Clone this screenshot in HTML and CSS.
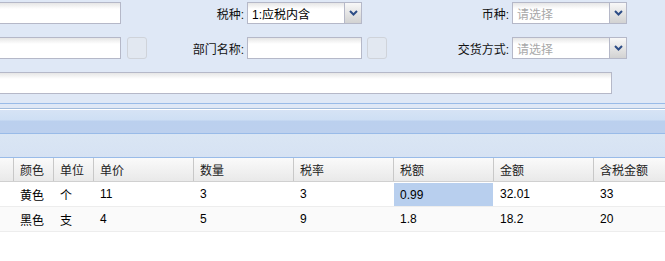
FILE: index.html
```html
<!DOCTYPE html>
<html lang="zh">
  <head>
    <meta charset="UTF-8" />
    <title>订单明细</title>
    <link rel="stylesheet" href="styles.css">
  </head>
  <body>
    <div class="form-panel">
      <div class="form-grid">
        <div class="field text c-first"></div>
        <div class="label c-lab1">税种:</div>
        <div class="field combo c-f1">
          <span class="combo-value">1:应税内含</span>
          <span class="trigger"><svg width="9" height="6" viewBox="0 0 9 6"><polyline points="1,1 4.5,4.5 8,1" fill="none" stroke="#2d4d86" stroke-width="2"/></svg></span>
        </div>
        <div class="label c-lab2">币种:</div>
        <div class="field combo c-f2">
          <span class="combo-value empty">请选择</span>
          <span class="trigger"><svg width="9" height="6" viewBox="0 0 9 6"><polyline points="1,1 4.5,4.5 8,1" fill="none" stroke="#2d4d86" stroke-width="2"/></svg></span>
        </div>

        <div class="field text c-first"></div>
        <div class="btn c-btn1"></div>
        <div class="label c-lab1">部门名称:</div>
        <div class="field text c-f1"></div>
        <div class="btn c-btn2"></div>
        <div class="label c-lab2">交货方式:</div>
        <div class="field combo c-f2">
          <span class="combo-value empty">请选择</span>
          <span class="trigger"><svg width="9" height="6" viewBox="0 0 9 6"><polyline points="1,1 4.5,4.5 8,1" fill="none" stroke="#2d4d86" stroke-width="2"/></svg></span>
        </div>

        <div class="field text c-wide"></div>
      </div>
    </div>

    <div class="gap-strip"></div>
    <div class="panel-header"></div>
    <div class="toolbar"></div>

    <div class="grid">
      <div class="grid-row head">
        <div class="cell"></div>
        <div class="cell">颜色</div>
        <div class="cell">单位</div>
        <div class="cell">单价</div>
        <div class="cell">数量</div>
        <div class="cell">税率</div>
        <div class="cell">税额</div>
        <div class="cell">金额</div>
        <div class="cell">含税金额</div>
      </div>
      <div class="grid-row">
        <div class="cell"></div>
        <div class="cell">黄色</div>
        <div class="cell">个</div>
        <div class="cell">11</div>
        <div class="cell">3</div>
        <div class="cell">3</div>
        <div class="cell selected">0.99</div>
        <div class="cell">32.01</div>
        <div class="cell">33</div>
      </div>
      <div class="grid-row alt">
        <div class="cell"></div>
        <div class="cell">黑色</div>
        <div class="cell">支</div>
        <div class="cell">4</div>
        <div class="cell">5</div>
        <div class="cell">9</div>
        <div class="cell">1.8</div>
        <div class="cell">18.2</div>
        <div class="cell">20</div>
      </div>
    </div>
  </body>
</html>
```

FILE: styles.css
```css
body {
  margin: 0;
  width: 665px;
  height: 261px;
  overflow: hidden;
  background: #fff;
  font-family: "Liberation Sans", "Noto Sans CJK SC", sans-serif;
  font-size: 12px;
  color: #000;
}
.form-panel {
  background: #dfe8f6;
  height: 103px;
  border-bottom: 1px solid #99bbe8;
  overflow: hidden;
}
.form-grid {
  display: grid;
  grid-template-columns: 131px 6px 20px 100px 115px 5px 20px 125px 115px;
  grid-auto-rows: 22px;
  row-gap: 13px;
  margin-left: -10px;
  padding-top: 2px;
}
.c-first { grid-column: 1; }
.c-btn1 { grid-column: 3; }
.c-lab1 { grid-column: 4; }
.c-f1 { grid-column: 5; }
.c-btn2 { grid-column: 7; }
.c-lab2 { grid-column: 8; }
.c-f2 { grid-column: 9; }
.c-wide {
  grid-column: 1 / 10;
  width: 622px;
}
.label {
  display: flex;
  align-items: center;
  justify-content: flex-end;
  padding-right: 3px;
  color: #111;
}
.field {
  box-sizing: border-box;
  border: 1px solid #b5b8c8;
  background: linear-gradient(#e6e6e6, #ffffff 6px);
}
.combo {
  display: flex;
  align-items: center;
}
.combo-value {
  flex: 1;
  padding-left: 4px;
  color: #000;
}
.combo-value.empty {
  color: #a8a8a8;
}
.trigger {
  width: 17px;
  align-self: stretch;
  box-sizing: border-box;
  border-left: 1px solid #b5b8c8;
  background: linear-gradient(#f8f8f8, #d2d2d2);
  display: flex;
  align-items: center;
  justify-content: center;
}
.btn {
  box-sizing: border-box;
  border: 1px solid #cfd3da;
  border-radius: 3px;
  background: #e2e8f1;
}
.gap-strip {
  height: 4px;
  background: #dfe8f6;
}
.panel-header {
  height: 24px;
  border-top: 1px solid #a3bcdc;
  border-bottom: 1px solid #99bbe8;
  background: linear-gradient(#ffffff 0, #ffffff 1px, #d6e3f5 1px, #cedff4 11px, #bbd0ee 12px, #bcd0ee);
}
.toolbar {
  height: 23px;
  border-bottom: 1px solid #99bbe8;
  background: linear-gradient(#dae6f4, #d6e2f3);
}
.grid {
  margin-left: -8px;
}
.grid-row {
  display: grid;
  grid-template-columns: 22px 40px 40px 100px 100px 100px 100px 100px 100px;
  height: 25px;
  box-sizing: border-box;
  border-bottom: 1px solid #ededed;
}
.grid-row.alt {
  background: #fafafa;
}
.grid-row.head {
  height: 24px;
  border-bottom: 1px solid #d0d0d0;
  background: linear-gradient(#fafafa, #e9e9e9);
}
.cell {
  display: flex;
  align-items: center;
  padding-left: 6px;
  box-sizing: border-box;
  white-space: nowrap;
  overflow: hidden;
}
.head .cell {
  border-right: 1px solid #c8c8c8;
  color: #222;
}
.cell.selected {
  background: #b8cfee;
  margin-top: 1px;
  margin-right: 1px;
}
```
